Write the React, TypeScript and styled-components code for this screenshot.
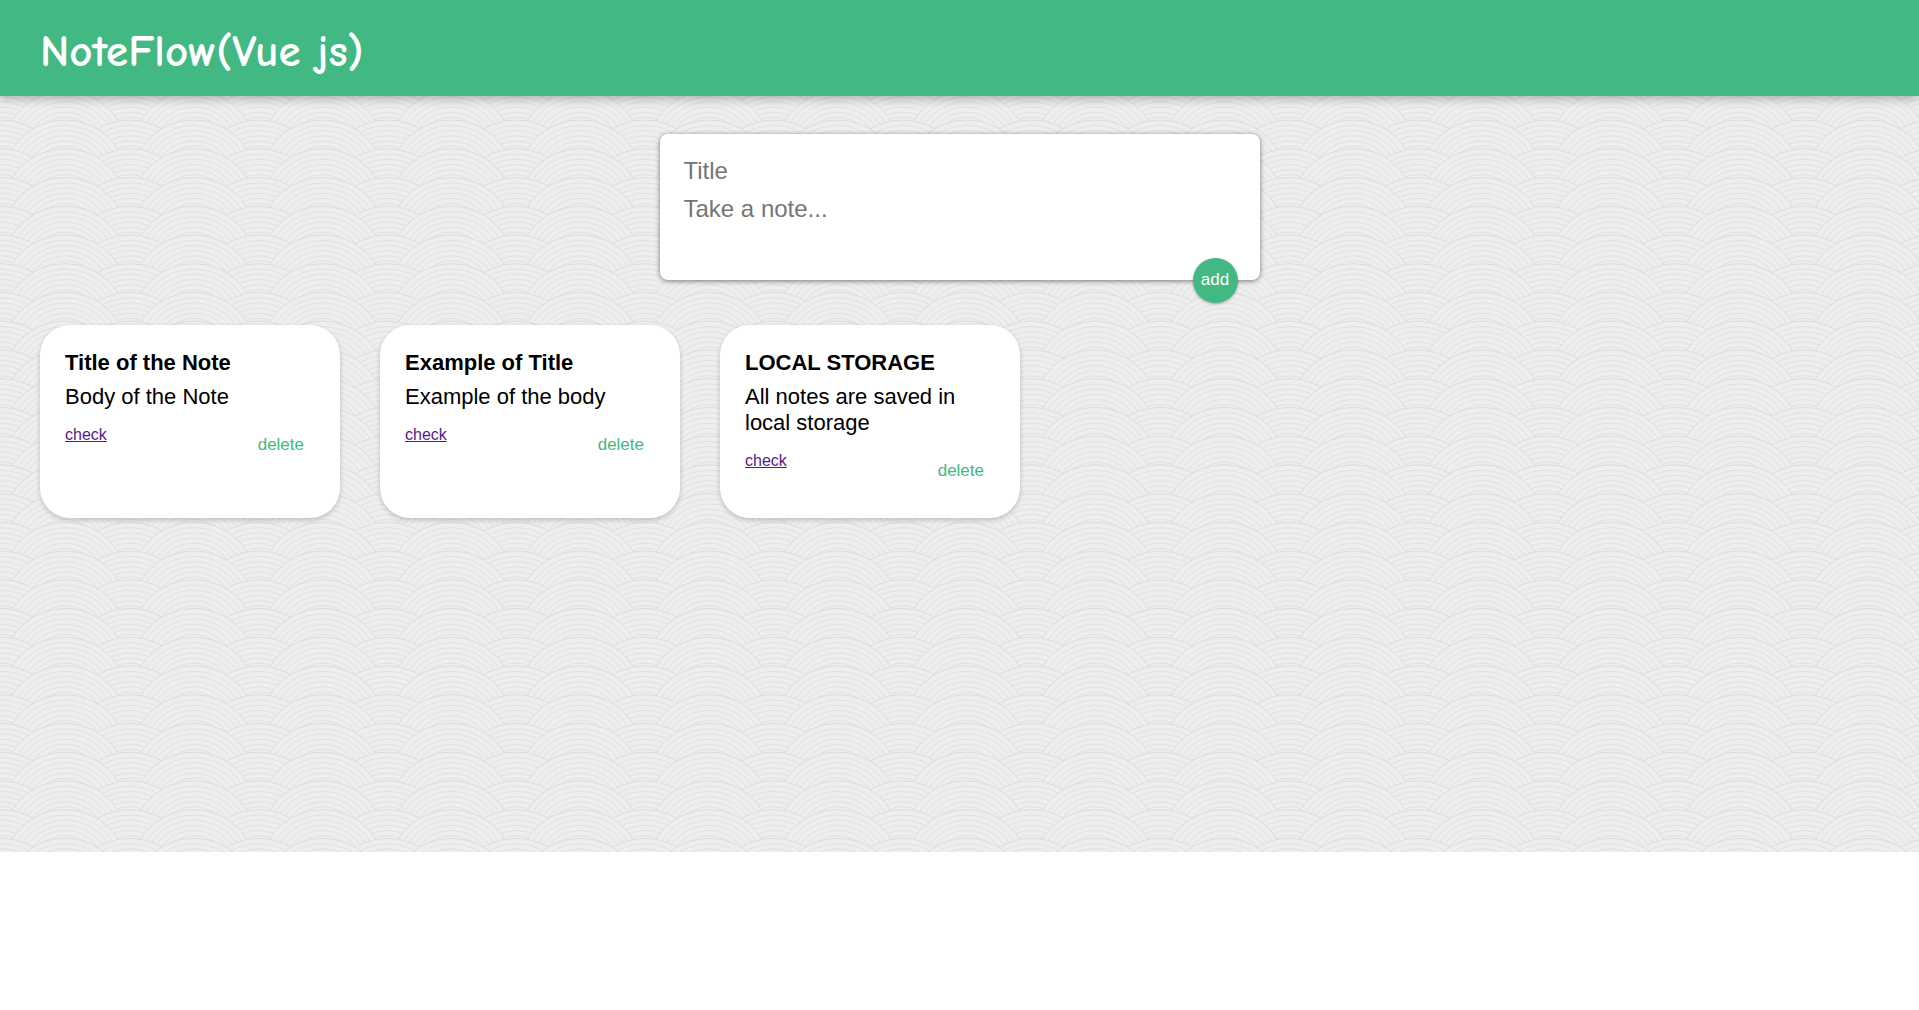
import React, { useState } from "react";
import styled, { createGlobalStyle } from "styled-components";

const GREEN = "#42b883";

/* Seigaiha wave tile: every row holds a low scallop between two front ones. */
const COLS = 5;
const ROWS = 15;
const TILE_W = 644;
const TILE_H = 431;
const RADII = [56.6, 51.5, 46.2, 41, 36];

function scallop(cx: number, apex: number) {
  const cy = apex + 62;
  const rings = RADII.map(
    (r) => `<circle cx='${cx}' cy='${cy}' r='${r}' stroke='#e1e1e1'/>`
  ).join("");
  return `<circle cx='${cx}' cy='${cy}' r='62' stroke='#dcdcdc'/>${rings}`;
}

function waveTile() {
  const stepX = TILE_W / COLS;
  const stepY = TILE_H / ROWS;
  let shapes = "";
  for (let row = -5; row <= ROWS; row++) {
    const apex = 5 + row * stepY;
    for (let col = -1; col <= COLS; col++) shapes += scallop(1 + col * stepX, apex);
    for (let col = -1; col <= COLS; col++) shapes += scallop(65 + col * stepX, apex);
  }
  const svg = `<svg xmlns='http://www.w3.org/2000/svg' width='${TILE_W}' height='${TILE_H}'><g fill='#eee' stroke-width='1'>${shapes}</g></svg>`;
  return `url("data:image/svg+xml,${encodeURIComponent(svg)}")`;
}

const GlobalStyle = createGlobalStyle`
  * { box-sizing: border-box; }
  body {
    margin: 0;
    background: #fff;
    color: #000;
    font-family: "Liberation Sans", Arial, sans-serif;
  }
`;

const Page = styled.div`
  min-height: calc(100vh - 158px);
  background: #eee ${waveTile()};
`;

const Header = styled.header`
  display: flex;
  align-items: center;
  height: 96px;
  padding: 6px 40px 0;
  background: ${GREEN};
  box-shadow: 0 2px 10px rgba(0, 0, 0, 0.3);
`;

const Brand = styled.h1`
  margin: 0;
  color: #fff;
  font: 700 45px/56px "Comic Sans MS", "Comic Neue", cursive;
`;

const NoteForm = styled.form`
  position: relative;
  display: flex;
  flex-direction: column;
  width: 600px;
  max-width: calc(100% - 80px);
  margin: 38px auto 45px;
  padding: 18px 24px 22px;
  border-radius: 8px;
  background: #fff;
  box-shadow: 0 1px 5px rgba(0, 0, 0, 0.5);
`;

const field = `
  width: 100%;
  padding: 4px 0;
  border: 0;
  outline: 0;
  background: none;
  font: 24px/30px "Liberation Sans", Arial, sans-serif;
  &::placeholder { color: #757575; opacity: 1; }
`;

const TitleField = styled.input`
  ${field}
  height: 38px;
  padding: 0;
`;

const BodyField = styled.textarea`
  ${field}
  height: 68px;
  resize: none;
`;

const AddButton = styled.button`
  position: absolute;
  right: 22px;
  bottom: -23px;
  width: 45px;
  height: 45px;
  padding: 0 0 2px;
  border: 0;
  border-radius: 50%;
  background: ${GREEN};
  color: #fff;
  font: 17px "Liberation Sans", Arial, sans-serif;
  box-shadow: 0 1px 3px rgba(0, 0, 0, 0.3);
  cursor: pointer;
`;

const Notes = styled.main`
  display: grid;
  grid-template-columns: repeat(auto-fill, 300px);
  gap: 40px;
  padding: 0 40px 40px;
`;

const Card = styled.article`
  padding: 25px 25px 27px;
  border-radius: 30px;
  background: #fff;
  box-shadow: 0 2px 5px rgba(0, 0, 0, 0.2);
`;

const CardTitle = styled.h2`
  margin: 0 0 8px;
  font-size: 22px;
  line-height: 26px;
`;

const CardText = styled.p`
  margin: 0 0 15px;
  font-size: 22px;
  line-height: 26px;
`;

const CardFooter = styled.div`
  display: flex;
  align-items: flex-start;
  justify-content: space-between;
`;

const CheckLink = styled.a`
  color: #551a8b;
  font-size: 16px;
  line-height: 20px;
`;

const DeleteButton = styled.button`
  padding: 10px 11px;
  border: 0;
  background: none;
  color: ${GREEN};
  font: 17px/20px "Liberation Sans", Arial, sans-serif;
  cursor: pointer;
`;

const initialNotes = [
  { id: 1, title: "Title of the Note", body: "Body of the Note" },
  { id: 2, title: "Example of Title", body: "Example of the body" },
  { id: 3, title: "LOCAL STORAGE", body: "All notes are saved in local storage" },
];

export default function App() {
  const [notes, setNotes] = useState(initialNotes);
  const [title, setTitle] = useState("");
  const [body, setBody] = useState("");

  const addNote = (event: React.FormEvent) => {
    event.preventDefault();
    if (!title && !body) return;
    setNotes([...notes, { id: Date.now(), title, body }]);
    setTitle("");
    setBody("");
  };

  return (
    <>
      <GlobalStyle />
      <Page>
        <Header>
          <Brand>NoteFlow(Vue js)</Brand>
        </Header>
        <NoteForm onSubmit={addNote}>
          <TitleField
            aria-label="Title"
            placeholder="Title"
            value={title}
            onChange={(e) => setTitle(e.target.value)}
          />
          <BodyField
            aria-label="Take a note..."
            placeholder="Take a note..."
            value={body}
            onChange={(e) => setBody(e.target.value)}
          />
          <AddButton type="submit">add</AddButton>
        </NoteForm>
        <Notes>
          {notes.map((note) => (
            <Card key={note.id}>
              <CardTitle>{note.title}</CardTitle>
              <CardText>{note.body}</CardText>
              <CardFooter>
                <CheckLink href="#">check</CheckLink>
                <DeleteButton
                  type="button"
                  onClick={() => setNotes(notes.filter((n) => n.id !== note.id))}
                >
                  delete
                </DeleteButton>
              </CardFooter>
            </Card>
          ))}
        </Notes>
      </Page>
    </>
  );
}
